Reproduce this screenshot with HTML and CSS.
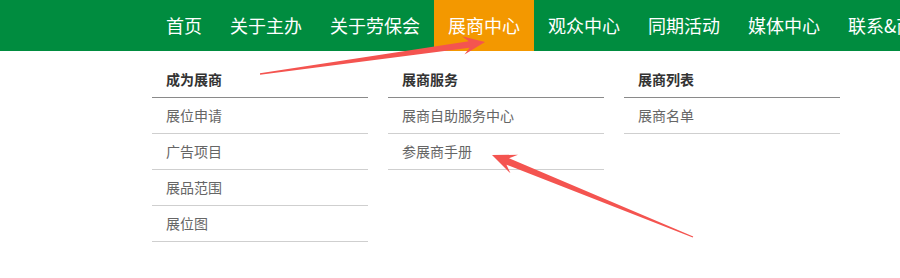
FILE: index.html
```html
<!DOCTYPE html>
<html lang="zh-CN">
<head>
  <meta charset="UTF-8">
  <title>展商中心</title>
  <link rel="stylesheet" href="styles.css">
</head>
<body>
  <!-- 导航 -->
  <div class="nav">
    <ul class="menu">
      <li><a href="#">首页</a></li>
      <li><a href="#">关于主办</a></li>
      <li><a href="#">关于劳保会</a></li>
      <li class="active"><a href="#">展商中心</a></li>
      <li><a href="#">观众中心</a></li>
      <li><a href="#">同期活动</a></li>
      <li><a href="#">媒体中心</a></li>
      <li><a href="#">联系&amp;商务合作</a></li>
    </ul>
  </div>

  <!-- 下拉菜单 -->
  <div class="dropdown">
    <div class="col">
      <h4>成为展商</h4>
      <a href="#">展位申请</a>
      <a href="#">广告项目</a>
      <a href="#">展品范围</a>
      <a href="#">展位图</a>
    </div>
    <div class="col">
      <h4>展商服务</h4>
      <a href="#">展商自助服务中心</a>
      <a href="#">参展商手册</a>
    </div>
    <div class="col">
      <h4>展商列表</h4>
      <a href="#">展商名单</a>
    </div>
  </div>

  <!-- 标注箭头 -->
  <svg class="marks" width="900" height="278" viewBox="0 0 900 278">
    <polygon points="260.08,74.79 469.58,47.72 464.49,54.51 485,42 461.95,36.19 468.74,41.28 259.92,73.21" />
    <polygon points="693.23,236.44 509.06,158.18 518,154.8 492,155 510.44,173.32 506.42,164.66 692.77,237.56" />
  </svg>
</body>
</html>
```

FILE: styles.css
```css
body {
  margin: 0;
  padding: 0;
  font-family: "Microsoft YaHei", "Noto Sans CJK SC", sans-serif;
  background: #fff;
  position: relative;
  overflow: hidden;
}
a {
  text-decoration: none;
}
.nav {
  background-color: #008c3f;
  height: 51px;
  padding-left: 152px;
  overflow: hidden;
  white-space: nowrap;
}
.menu {
  list-style: none;
  margin: 0;
  padding: 0;
  display: flex;
}
.menu li {
  flex: none;
}
.menu a {
  display: block;
  padding: 0 14px;
  line-height: 51px;
  font-size: 18px;
  color: #fff;
}
.menu li.active {
  background-color: #f39800;
}
.dropdown {
  display: flex;
  gap: 20px;
  padding: 11px 0 0 152px;
}
.dropdown .col {
  width: 216px;
}
.dropdown h4 {
  margin: 0;
  padding-left: 14px;
  line-height: 35px;
  font-size: 14px;
  font-weight: bold;
  color: #333;
  border-bottom: 1px solid #8a8a8a;
}
.dropdown .col a {
  display: block;
  padding-left: 14px;
  line-height: 35px;
  font-size: 14px;
  color: #666;
  border-bottom: 1px solid #cfcfcf;
}
.marks {
  position: absolute;
  left: 0;
  top: 0;
  fill: #f45450;
  pointer-events: none;
}
```
